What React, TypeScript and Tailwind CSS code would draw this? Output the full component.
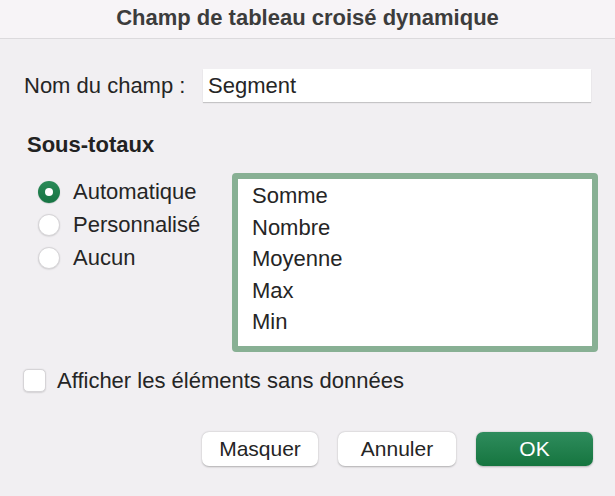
import React from "react";

const items = ["Somme", "Nombre", "Moyenne", "Max", "Min"];

function Radio({ checked, label }: { checked?: boolean; label: string }) {
  return (
    <div className="flex h-[33px] items-center gap-[13px]">
      {checked ? (
        <div className="flex h-[22px] w-[22px] shrink-0 items-center justify-center rounded-full bg-gradient-to-b from-[#2a8a58] to-[#167443] shadow-[0_0.5px_1px_rgba(0,0,0,0.25)]">
          <div className="h-[8px] w-[8px] rounded-full bg-white" />
        </div>
      ) : (
        <div className="h-[22px] w-[22px] shrink-0 rounded-full border border-[#d6d4d7] bg-white shadow-[0_0.5px_1.5px_rgba(0,0,0,0.15)]" />
      )}
      <span className="whitespace-nowrap leading-[33px]">{label}</span>
    </div>
  );
}

export default function App() {
  return (
    <div
      className="flex h-[496px] w-[615px] flex-col bg-[#f1eff2] text-[22px] text-[#252525]"
      style={{ fontFamily: '"Liberation Sans", Arial, sans-serif' }}
    >
      <div className="flex h-[39px] shrink-0 items-center justify-center border-b border-[#dcdadd] bg-[#f7f4f7] pb-[4px] text-[22px] font-bold text-[#3c3c3c]">
        Champ de tableau croisé dynamique
      </div>

      <div className="mt-[30px] flex items-center pl-[24px]">
        <span className="w-[179px] shrink-0 leading-[26px]">Nom du champ :</span>
        <div className="flex h-[33px] w-[388px] items-center bg-white pl-[5px] shadow-[0_1px_1px_rgba(0,0,0,0.18)]">
          Segment
        </div>
      </div>

      <div className="mt-[30px] pl-[27px] font-bold leading-[26px] text-[#222]">Sous-totaux</div>

      <div className="mt-[15px] flex">
        <div className="mt-[2px] flex w-[232px] shrink-0 flex-col pl-[38px]">
          <Radio checked label="Automatique" />
          <Radio label="Personnalisé" />
          <Radio label="Aucun" />
        </div>
        <div className="h-[179px] w-[366px] shrink-0 rounded-[4px] border-[6px] border-[#88b094] bg-white pl-[14px] pt-[1px]">
          {items.map((t) => (
            <div key={t} className="h-[31.5px] leading-[31.5px]">
              {t}
            </div>
          ))}
        </div>
      </div>

      <div className="mt-[12px] flex h-[33px] items-center gap-[11px] pl-[23px]">
        <div className="h-[23px] w-[23px] shrink-0 rounded-[5px] border border-[#d6d4d7] bg-white shadow-[0_0.5px_1.5px_rgba(0,0,0,0.12)]" />
        <span className="leading-[33px]">Afficher les éléments sans données</span>
      </div>

      <div className="mt-[35px] flex justify-end gap-[20px] pr-[22px] text-[21px]">
        <button className="flex h-[34px] w-[116px] items-center justify-center rounded-[7px] bg-white text-[#252525] shadow-[0_0.5px_2px_rgba(0,0,0,0.28)]">
          Masquer
        </button>
        <button className="flex h-[34px] w-[118px] items-center justify-center rounded-[7px] bg-white text-[#252525] shadow-[0_0.5px_2px_rgba(0,0,0,0.28)]">
          Annuler
        </button>
        <button className="flex h-[34px] w-[117px] items-center justify-center rounded-[7px] bg-gradient-to-b from-[#2e8c5d] to-[#15753f] text-white shadow-[0_0.5px_2px_rgba(0,0,0,0.25)]">
          OK
        </button>
      </div>
    </div>
  );
}
